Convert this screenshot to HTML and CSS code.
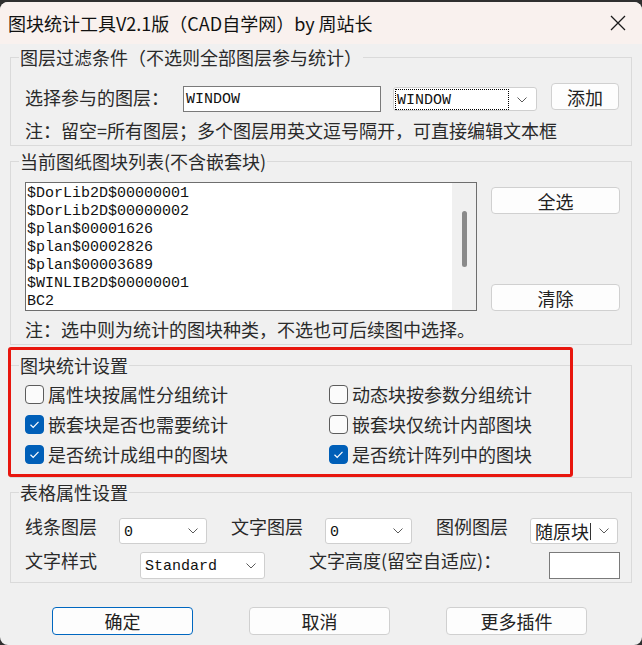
FILE: index.html
```html
<!DOCTYPE html>
<html lang="zh-CN">
<head>
<meta charset="utf-8">
<title>图块统计工具</title>
<link rel="stylesheet" href="styles.css">
</head>
<body>
<div class="window">
  <div class="titlebar">
    <span class="title">图块统计工具V2.1版（CAD自学网）by 周站长</span>
    <svg class="close" width="16" height="16" viewBox="0 0 16 16"><path d="M1 1 L15 15 M15 1 L1 15"/></svg>
  </div>
  <div class="content">
    <fieldset class="group g1">
      <legend>图层过滤条件（不选则全部图层参与统计）</legend>
      <div class="layer-row">
        <span class="label layer-label">选择参与的图层：</span>
        <div class="textbox layer-input mono">WINDOW</div>
        <div class="combo layer-combo">
          <span class="focus mono">WINDOW</span>
          <svg class="chev" width="10" height="6" viewBox="0 0 10 6"><path d="M0.5 0.5 L5 5 L9.5 0.5"/></svg>
        </div>
        <div class="btn add-btn">添加</div>
      </div>
      <div class="note">注：留空=所有图层；多个图层用英文逗号隔开，可直接编辑文本框</div>
    </fieldset>

    <fieldset class="group g2">
      <legend>当前图纸图块列表(不含嵌套块)</legend>
      <div class="list-row">
        <div class="listbox">
          <div class="items mono">
            <div>$DorLib2D$00000001</div>
            <div>$DorLib2D$00000002</div>
            <div>$plan$00001626</div>
            <div>$plan$00002826</div>
            <div>$plan$00003689</div>
            <div>$WINLIB2D$00000001</div>
            <div>BC2</div>
          </div>
          <div class="track"><div class="thumb"></div></div>
        </div>
        <div class="list-btns">
          <div class="btn side-btn">全选</div>
          <div class="btn side-btn">清除</div>
        </div>
      </div>
      <div class="note">注：选中则为统计的图块种类，不选也可后续图中选择。</div>
    </fieldset>

    <fieldset class="group g3">
      <legend>图块统计设置</legend>
      <div class="checks">
        <div class="check"><span class="box"></span><span>属性块按属性分组统计</span></div>
        <div class="check"><span class="box"></span><span>动态块按参数分组统计</span></div>
        <div class="check"><span class="box on"><svg width="19" height="19" viewBox="0 0 19 19"><path d="M5.5 9.8 L8.2 12.4 L13.5 6.8"/></svg></span><span>嵌套块是否也需要统计</span></div>
        <div class="check"><span class="box"></span><span>嵌套块仅统计内部图块</span></div>
        <div class="check"><span class="box on"><svg width="19" height="19" viewBox="0 0 19 19"><path d="M5.5 9.8 L8.2 12.4 L13.5 6.8"/></svg></span><span>是否统计成组中的图块</span></div>
        <div class="check"><span class="box on"><svg width="19" height="19" viewBox="0 0 19 19"><path d="M5.5 9.8 L8.2 12.4 L13.5 6.8"/></svg></span><span>是否统计阵列中的图块</span></div>
      </div>
    </fieldset>

    <fieldset class="group g4">
      <legend>表格属性设置</legend>
      <div class="prop-row row-a">
        <span class="label plabel">线条图层</span>
        <div class="combo small c88"><span class="mono">0</span><svg class="chev" width="10" height="6" viewBox="0 0 10 6"><path d="M0.5 0.5 L5 5 L9.5 0.5"/></svg></div>
        <span class="label plabel gapl">文字图层</span>
        <div class="combo small c87"><span class="mono">0</span><svg class="chev" width="10" height="6" viewBox="0 0 10 6"><path d="M0.5 0.5 L5 5 L9.5 0.5"/></svg></div>
        <span class="label plabel gapl">图例图层</span>
        <div class="combo small c88"><span class="cjk-val">随原块<span class="caret"></span></span><svg class="chev" width="10" height="6" viewBox="0 0 10 6"><path d="M0.5 0.5 L5 5 L9.5 0.5"/></svg></div>
      </div>
      <div class="prop-row row-b">
        <span class="label style-label">文字样式</span>
        <div class="combo small c125"><span class="mono">Standard</span><svg class="chev" width="10" height="6" viewBox="0 0 10 6"><path d="M0.5 0.5 L5 5 L9.5 0.5"/></svg></div>
        <span class="label height-label">文字高度(留空自适应)：</span>
        <div class="textbox height-input"></div>
      </div>
    </fieldset>

    <div class="actions">
      <div class="btn action default">确定</div>
      <div class="btn action">取消</div>
      <div class="btn action">更多插件</div>
    </div>
  </div>
  <div class="highlight"></div>
</div>
</body>
</html>
```

FILE: styles.css
```css
html, body {
  margin: 0;
  padding: 0;
}
body {
  width: 642px;
  height: 645px;
  overflow: hidden;
  background: #2f2f2f;
  font-family: "Noto Sans CJK SC", "Noto Sans", sans-serif;
  color: #222;
}
.window {
  position: relative;
  margin-top: 2px;
  height: 643px;
  background: #f0f0f0;
  border-radius: 8px;
  overflow: hidden;
}
.titlebar {
  height: 42px;
  background: #f9f1ee;
  display: flex;
  align-items: center;
  justify-content: space-between;
  padding: 0 16px 0 8px;
}
.title {
  font-size: 18px;
  line-height: 24px;
  color: #111;
}
.close path {
  stroke: #1a1a1a;
  stroke-width: 1.3;
  fill: none;
}
.content {
  padding: 0 10px;
}
.mono {
  font-family: "Liberation Mono", "DejaVu Sans Mono", monospace;
  font-size: 15px;
  color: #111;
}
.group {
  margin: 0;
  padding: 0 11px 0 14px;
  border: 1px solid #dadada;
  min-width: 0;
}
.group legend {
  margin-left: -6px;
  padding: 0 1px;
  font-size: 18px;
  line-height: 22px;
  color: #2a2a2a;
}
.label {
  font-size: 18px;
  line-height: 22px;
  color: #2a2a2a;
  white-space: nowrap;
}
.note {
  font-size: 18px;
  line-height: 22px;
  margin-top: 7px;
  padding-bottom: 4px;
  color: #2a2a2a;
  white-space: nowrap;
}
.chev path {
  stroke: #5a5a5a;
  stroke-width: 1;
  fill: none;
}

/* group 1 */
.g1 { margin-top: 2px; }
.layer-row {
  display: flex;
  align-items: flex-start;
  margin-top: 15px;
  height: 29px;
}
.layer-label {
  width: 158px;
  margin-top: 3px;
}
.textbox {
  box-sizing: border-box;
  background: #fff;
  border: 1px solid #7a7a7a;
}
.layer-input {
  width: 198px;
  height: 26px;
  margin-top: 3px;
  padding: 2px 0 0 2px;
  line-height: 22px;
}
.combo {
  box-sizing: border-box;
  background: #fff;
  border: 1px solid #cfcfcf;
  border-radius: 3px;
  display: flex;
  align-items: center;
  justify-content: space-between;
}
.layer-combo {
  width: 144px;
  height: 24px;
  margin-top: 4px;
  margin-left: 12px;
  padding: 1px 9px 0 1px;
  align-items: flex-start;
}
.layer-combo .chev {
  margin-top: 8px;
}
.focus {
  box-sizing: border-box;
  width: 114px;
  height: 21px;
  border: 1px dotted #000;
  line-height: 19px;
  padding: 1px 0 0 1px;
}
.btn {
  box-sizing: border-box;
  background: #fdfdfd;
  border: 1px solid #d0d0d0;
  border-radius: 4px;
  font-size: 18px;
  color: #222;
  display: flex;
  align-items: center;
  justify-content: center;
}
.add-btn {
  width: 68px;
  height: 27px;
  margin-left: 14px;
}

/* group 2 */
.g2 { margin-top: 4px; }
.list-row {
  display: flex;
  margin-top: 10px;
  gap: 14px;
}
.listbox {
  box-sizing: border-box;
  width: 452px;
  height: 129px;
  border: 1px solid #6e6e6e;
  background: #fff;
  display: flex;
}
.items {
  flex: 1;
  padding: 2px 0 0 1px;
  line-height: 18px;
}
.track {
  width: 24px;
  background: #f0f0f0;
}
.thumb {
  width: 5px;
  height: 56px;
  margin-left: 10px;
  margin-top: 28px;
  background: #8a8a8a;
  border-radius: 3px;
}
.list-btns {
  width: 129px;
  display: flex;
  flex-direction: column;
  justify-content: space-between;
  padding-top: 5px;
}
.side-btn {
  height: 27px;
}

/* group 3 */
.g3 {
  margin-top: 9px;
  padding-bottom: 8px;
}
.checks {
  display: grid;
  grid-template-columns: 304px 1fr;
  grid-auto-rows: 30px;
  margin-top: 3px;
}
.check {
  display: flex;
  align-items: center;
  gap: 4px;
  font-size: 18px;
  color: #2a2a2a;
  white-space: nowrap;
}
.box {
  box-sizing: border-box;
  width: 19px;
  height: 19px;
  border: 1px solid #5c5c5c;
  border-radius: 4px;
  background: #fbfbfb;
  display: block;
}
.box.on {
  background: #005fb8;
  border-color: #005fb8;
}
.box svg {
  display: block;
  margin: -1px;
}
.box path {
  stroke: #fff;
  stroke-width: 1.2;
  fill: none;
}

/* group 4 */
.g4 {
  margin-top: 3px;
  padding-bottom: 3px;
}
.prop-row {
  display: flex;
  align-items: flex-start;
}
.row-a {
  margin-top: 15px;
  height: 26px;
}
.row-b {
  margin-top: 8px;
  height: 27px;
}
.plabel {
  width: 94px;
  margin-top: -3px;
}
.gapl {
  margin-left: 24px;
}
.small {
  height: 26px;
  padding: 0 8px 0 4px;
}
.small .mono {
  line-height: 24px;
  padding-top: 3px;
}
.c88 { width: 88px; }
.c87 { width: 87px; }
.c125 { width: 125px; height: 27px; }
.cjk-val {
  font-size: 18px;
  line-height: 24px;
  display: flex;
  align-items: center;
}
.caret {
  display: inline-block;
  width: 1px;
  height: 17px;
  background: #333;
  margin-left: 1px;
}
.style-label {
  width: 115px;
  margin-top: -3px;
}
.height-label {
  width: 240px;
  margin-left: 44px;
  margin-top: -3px;
}
.height-input {
  width: 71px;
  height: 27px;
}

/* buttons */
.actions {
  display: flex;
  gap: 56px;
  margin-top: 24px;
  padding-left: 42px;
}
.action {
  width: 141px;
  height: 28px;
}
.action.default {
  border-color: #0067c0;
}

/* annotation */
.highlight {
  position: absolute;
  left: 8px;
  top: 345px;
  width: 565px;
  height: 130px;
  box-sizing: border-box;
  border: 3px solid #e8160e;
  border-radius: 3px;
}
```
